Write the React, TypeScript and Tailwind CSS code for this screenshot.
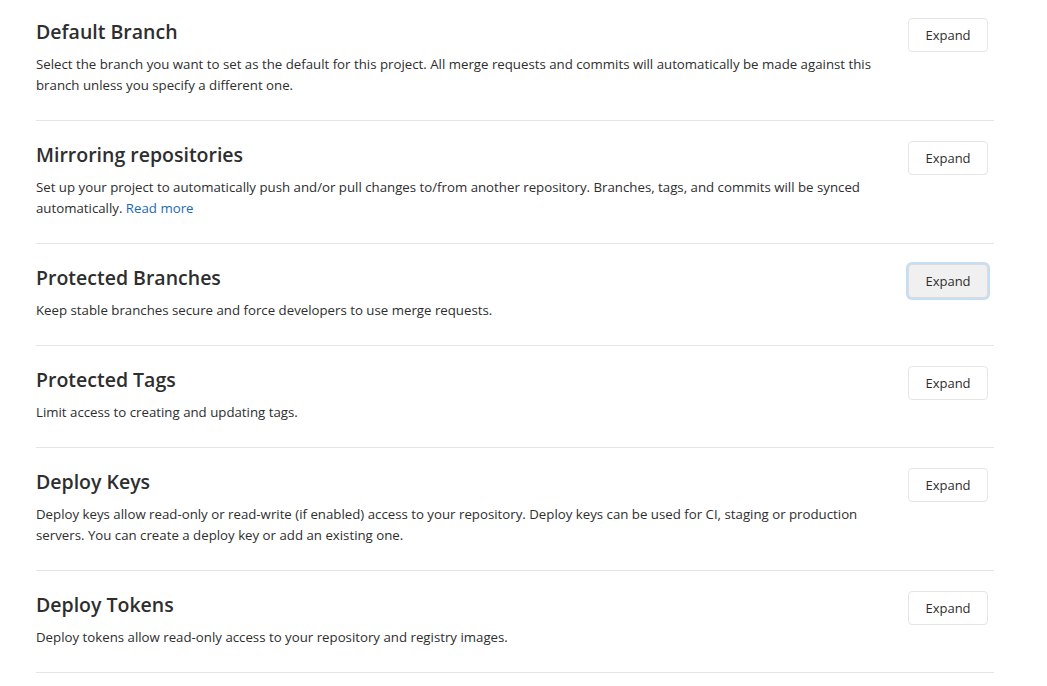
const sections = [
  {
    title: 'Default Branch',
    text: 'Select the branch you want to set as the default for this project. All merge requests and commits will automatically be made against this branch unless you specify a different one.',
  },
  {
    title: 'Mirroring repositories',
    text: 'Set up your project to automatically push and/or pull changes to/from another repository. Branches, tags, and commits will be synced automatically.',
    link: 'Read more',
  },
  {
    title: 'Protected Branches',
    text: 'Keep stable branches secure and force developers to use merge requests.',
    focused: true,
  },
  {
    title: 'Protected Tags',
    text: 'Limit access to creating and updating tags.',
  },
  {
    title: 'Deploy Keys',
    text: 'Deploy keys allow read-only or read-write (if enabled) access to your repository. Deploy keys can be used for CI, staging or production servers. You can create a deploy key or add an existing one.',
  },
  {
    title: 'Deploy Tokens',
    text: 'Deploy tokens allow read-only access to your repository and registry images.',
  },
];

const App = () => {
  return (
    <div className="min-h-screen bg-white font-['Open_Sans',sans-serif] text-[#2e2e2e]">
      <div className="ml-[36px] w-[958px]">
        {sections.map((s, i) => (
          <section
            key={s.title}
            className={`flex justify-between border-b border-[#e5e5e5] pb-6 ${i === 0 ? 'pt-[18px]' : 'pt-5'}`}
          >
            <div className="w-[848px]">
              <h4 className="text-[19.5px] leading-[28px] font-semibold">{s.title}</h4>
              <p className="mt-2 text-[13.25px] leading-[21px]">
                {s.text}
                {s.link && (
                  <>
                    {' '}
                    <a href="#" className="text-[#1b69b6]">{s.link}</a>
                  </>
                )}
              </p>
            </div>
            <div className="mr-[6px]">
              {s.focused ? (
                <button className="h-[34px] w-[80px] rounded-[4px] border border-[#dcdcdc] bg-[#f0f0f0] pt-px text-[13px] shadow-[0_0_0_2px_#c6ddf6]">
                  Expand
                </button>
              ) : (
                <button className="h-[34px] w-[80px] rounded-[4px] border border-[#e5e5e5] bg-white pt-px text-[13px]">
                  Expand
                </button>
              )}
            </div>
          </section>
        ))}
      </div>
    </div>
  );
};

export default App;
